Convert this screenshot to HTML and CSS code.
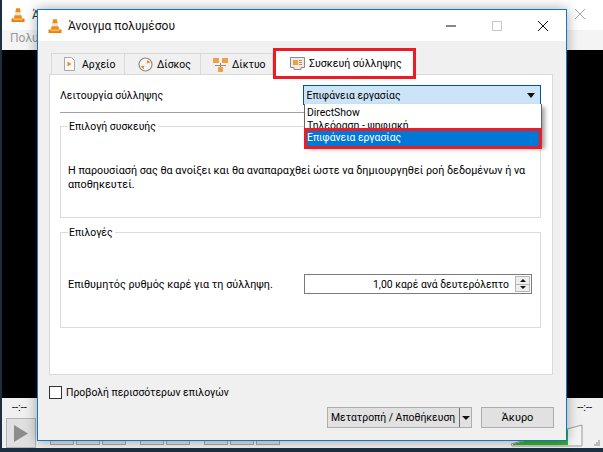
FILE: index.html
```html
<!DOCTYPE html>
<html lang="el">
<head>
<meta charset="utf-8">
<title>Άνοιγμα πολυμέσου</title>
<link rel="stylesheet" href="styles.css">
</head>
<body>
<svg width="0" height="0" class="defs">
  <symbol id="cone" viewBox="0 0 16 16">
    <path d="M6.2 1.2h3.6l1 4.3H5.2z" fill="#f08a12"/>
    <path d="M5.2 5.5h5.6l.6 2.8H4.6z" fill="#e9e4dc"/>
    <path d="M4.6 8.3h6.8l.7 3.2H3.9z" fill="#f08a12"/>
    <path d="M1.5 11.5h3v-.3l7 0v.3h3V15h-13z" fill="#e8800c"/>
    <path d="M3.9 11.5h8.2l.4 1.7H3.500z" fill="#f7b56a"/>
  </symbol>
</svg>

<div class="vlc">
  <div class="vlc-title">
    <svg class="vlc-cone"><use href="#cone"/></svg>
    <span class="vlc-title-text">Άν</span>
    <span class="vlc-close">
      <svg width="10" height="10" viewBox="0 0 10 10"><path d="M0 0l10 10M10 0L0 10" stroke="#a8a8a8" fill="none"/></svg>
    </span>
  </div>
  <div class="vlc-menu">Πολυ</div>
  <div class="vlc-video"></div>
  <div class="vlc-controls">
    <div class="vlc-times"><span>--:--</span><span>--:--</span></div>
    <div class="vlc-buttons">
      <div class="play"><svg width="14" height="17" viewBox="0 0 14 17"><path d="M0 0l14 8.500L0 17z" fill="#8c8c8c"/></svg></div>
      <div class="mini-group"><i></i><i></i><i></i></div>
      <div class="mini-group"><i></i><i></i></div>
      <div class="mini-group"><i></i><i></i><i></i></div>
      <svg class="volume" width="74" height="23" viewBox="0 0 74 23"><path d="M1 20L72 1v20a1 1 0 0 1-1 1H2z" fill="#f4f4f4" stroke="#9a9a9a"/><path d="M3 20L58 5.500V21H3z" fill="#39b02a"/></svg>
      <svg class="grip" width="6" height="6" viewBox="0 0 6 6"><path d="M4 0h2v2H4zM2 2h2v2H2zM4 2h2v2H4zM0 4h2v2H0zM2 4h2v2H2zM4 4h2v2H4z" fill="#bdbdbd"/></svg>
    </div>
  </div>
</div>

<div class="dialog">
  <header class="titlebar">
    <svg class="title-cone"><use href="#cone"/></svg>
    <span class="title-text">Άνοιγμα πολυμέσου</span>
    <span class="win-btn"><svg width="12" height="12" viewBox="0 0 12 12"><path d="M1 6h10" stroke="#111" fill="none"/></svg></span>
    <span class="win-btn"><svg width="12" height="12" viewBox="0 0 12 12"><rect x="1.500" y="1.500" width="9" height="9" stroke="#c8c8c8" fill="none"/></svg></span>
    <span class="win-btn"><svg width="12" height="12" viewBox="0 0 12 12"><path d="M1 1l10 10M11 1L1 11" stroke="#111" fill="none"/></svg></span>
  </header>

  <div class="body">
    <nav class="tabs">
      <div class="tab t1">
        <svg width="11" height="14" viewBox="0 0 11 14"><path d="M.5.500h7l3 3v10H.5z" fill="#fafafa" stroke="#a8a8a8"/><path d="M3.500 4.500l4 2.500-4 2.500z" fill="#f08a12"/></svg>
        <span>Αρχείο</span>
      </div>
      <div class="tab t2">
        <svg width="15" height="15" viewBox="0 0 15 15"><circle cx="7.500" cy="7.500" r="6.500" fill="#f6f6f6" stroke="#8c8c8c" stroke-width="1.200"/><path d="M8.500 6.500L9.500 3l3 2.500zM6.500 8.500L5.500 12l-3-2.500z" fill="#f08a12"/></svg>
        <span>Δίσκος</span>
      </div>
      <div class="tab t3">
        <svg width="15" height="15" viewBox="0 0 15 15"><path d="M7.500 6v5M2 8.500h11" stroke="#8c8c8c" fill="none"/><rect x="0" y="1" width="6" height="5" fill="#f0a040"/><rect x="9" y="1" width="6" height="5" fill="#f0a040"/><rect x="5" y="10" width="5" height="5" fill="#f0a040"/></svg>
        <span>Δίκτυο</span>
      </div>
      <div class="tab tab-active">
        <svg width="15" height="13" viewBox="0 0 15 13"><path d="M.5.500h14v10H11v2H4v-2H.5z" fill="#ececec" stroke="#8a8a8a"/><rect x="3" y="3" width="5" height="5" fill="#f0a040"/><path d="M9 3.500h3M9 5.500h3M9 7.500h3" stroke="#e08a30"/></svg>
        <span>Συσκευή σύλληψης</span>
      </div>
    </nav>

    <section class="pane">
      <div class="mode-row">
        <span class="mode-label">Λειτουργία σύλληψης</span>
        <div class="combo">
          <span>Επιφάνεια εργασίας</span>
          <span class="arrow"></span>
        </div>
      </div>
      <div class="rule"></div>

      <fieldset class="group group-device">
        <legend>Επιλογή συσκευής</legend>
        <p class="note">Η παρουσίασή σας θα ανοίξει και θα αναπαραχθεί ώστε να δημιουργηθεί ροή δεδομένων ή να αποθηκευτεί.</p>
      </fieldset>

      <fieldset class="group group-options">
        <legend>Επιλογές</legend>
        <div class="rate-row">
          <span class="rate-label">Επιθυμητός ρυθμός καρέ για τη σύλληψη.</span>
          <div class="spin">
            <span class="spin-value">1,00 καρέ ανά δευτερόλεπτο</span>
            <span class="spin-btns"><b class="up"></b><b class="down"></b></span>
          </div>
        </div>
      </fieldset>

      <ul class="dropdown">
        <li>DirectShow</li>
        <li class="clipped">Τηλεόραση - ψηφιακή</li>
        <li class="selected">Επιφάνεια εργασίας</li>
      </ul>
    </section>

    <label class="more">
      <span class="check"></span>
      <span>Προβολή περισσότερων επιλογών</span>
    </label>

    <footer class="actions">
      <div class="btn btn-split"><span class="btn-main">Μετατροπή / Αποθήκευση</span><span class="btn-drop"></span></div>
      <div class="btn btn-cancel">Άκυρο</div>
    </footer>
  </div>
</div>
</body>
</html>
```
FILE: styles.css
```css
* { box-sizing: border-box; }
html, body { margin: 0; width: 603px; height: 452px; overflow: hidden; }
body { background: #1c2f42; font: 10.400px/15px Roboto, "Noto Sans", sans-serif; color: #000; position: relative; white-space: nowrap; }
.defs { position: absolute; }

.vlc { position: absolute; left: 2px; top: 0; width: 601px; height: 448px; display: flex; flex-direction: column; background: #f0f0f0; }
.vlc-title { height: 30px; background: #fff; display: flex; align-items: center; padding-left: 8px; gap: 6px; flex: none; }
.vlc-cone { width: 16px; height: 16px; }
.vlc-title-text { font-size: 12px; color: #333; }
.vlc-close { margin-left: auto; margin-right: 18px; display: flex; margin-top: -2px; }
.vlc-menu { height: 20px; flex: none; color: #9a9a9a; padding: 1px 0 0 8px; background: #f4f4f4; font-size: 12px; }
.vlc-video { height: 348px; background: #000; flex: none; }
.vlc-controls { flex: 1; display: flex; flex-direction: column; background: #f0f0f0; position: relative; }
.vlc-times { display: flex; justify-content: space-between; padding: 2px 11px 0 10px; height: 20px; font-size: 11px; }
.vlc-buttons { display: flex; align-items: flex-end; padding-left: 4px; }
.play { width: 30px; height: 30px; border: 1px solid #b4b4b4; background: #e0e0e0; display: flex; align-items: center; justify-content: center; margin-right: 14px; }
.mini-group { display: flex; gap: 2px; margin-right: 14px; padding-bottom: 3px; }
.mini-group i { display: block; width: 24px; height: 8px; background: #e0e0e0; border: 1px solid #a8a8a8; }
.volume { position: absolute; left: 508px; bottom: 1px; }
.grip { position: absolute; right: 3px; bottom: 2px; }

.dialog { position: absolute; left: 37px; top: 9px; width: 530px; height: 432px; border: 1px solid #0a78d2; background: #f0f0f0; display: flex; flex-direction: column; box-shadow: 0 0 12px rgba(0,0,0,.35); }
.titlebar { height: 31px; flex: none; background: #fff; display: flex; align-items: center; padding-left: 9px; }
.title-cone { width: 16px; height: 16px; margin-right: 5px; }
.title-text { font-size: 12px; flex: 1; color: #111; padding-top: 2px; }
.win-btn { width: 46px; display: flex; justify-content: center; }

.body { flex: 1; padding: 12px 13px 0 11px; display: flex; flex-direction: column; }
.tabs { display: flex; height: 21px; flex: none; padding-left: 2px; }
.tab { display: flex; align-items: center; border: 1px solid #d9d9d9; border-bottom: none; border-left: none; background: #f0f0f0; padding-left: 12px; }
.t1 { width: 74px; border-left: 1px solid #d9d9d9; gap: 7px; }
.t2 { width: 76px; gap: 4px; padding-left: 13px; }
.t3 { width: 72px; gap: 4px; }
.tab-active { width: 143px; margin-top: -5px; height: 31px; gap: 4px; background: #fff; border: 3px solid #ed1c24; padding-left: 14px; position: relative; z-index: 2; font-size: 10.600px; }

.pane { position: relative; height: 301px; flex: none; background: #fff; border: 1px solid #d9d9d9; padding: 10px 11px 0 10px; }
.mode-row { display: flex; align-items: center; height: 20px; }
.mode-label { width: 244px; }
.combo { width: 238px; height: 20px; background: #cce4f7; border: 1px solid #005499; display: flex; align-items: center; justify-content: space-between; padding: 0 5px 0 2px; }
.arrow { width: 0; height: 0; border: 4px solid transparent; border-top: 5px solid #111; border-bottom: none; }
.rule { height: 1px; background: #a0a0a0; width: 244px; margin-top: 7px; }

.group { margin: 0; padding: 0; min-width: 0; border: 1px solid #dcdcdc; }
.group legend { padding: 0 2px 0 1px; margin-left: 7px; }
.group-device { margin-top: 6px; height: 99px; }
.note { margin: 30px 0 0 7px; width: 475px; line-height: 14px; white-space: normal; font-size: 10.800px; }
.group-options { margin-top: 7px; height: 103px; }
.rate-row { display: flex; align-items: center; margin-top: 34px; padding-left: 7px; }
.rate-label { width: 236px; font-size: 10.800px; }
.spin { width: 228px; height: 20px; border: 1px solid #7a7a7a; display: flex; align-items: center; justify-content: flex-end; padding-right: 1px; }
.spin-value { margin-right: 6px; }
.spin-btns { width: 15px; height: 16px; border: 1px solid #b5b5b5; display: flex; flex-direction: column; background: #eee; }
.spin-btns b { flex: 1; display: flex; align-items: center; justify-content: center; }
.spin-btns b::before { content: ""; border: 3px solid transparent; }
.up::before { border-bottom: 3px solid #111 !important; border-top: none !important; }
.down { border-top: 1px solid #b5b5b5; }
.down::before { border-top: 3px solid #111 !important; border-bottom: none !important; }

.dropdown { position: absolute; left: 254px; top: 29px; width: 238px; height: 42px; margin: 0; padding: 1px 0 0; list-style: none; background: #fff; border: 1px solid #646464; border-top: none; box-shadow: 3px 3px 4px rgba(0,0,0,.35); z-index: 3; }
.dropdown li { padding-left: 2px; height: 13px; line-height: 15px; }
.dropdown .clipped { height: 10px; overflow: hidden; }
.dropdown .selected { position: absolute; left: -1px; top: 24px; width: 238px; height: 21px; background: #0078d7; color: #fff; border: 3px solid #ed1c24; padding: 0; line-height: 14px; }

.more { display: flex; align-items: center; gap: 4px; margin-top: 11px; height: 13px; flex: none; }
.check { width: 13px; height: 13px; border: 1px solid #333; background: #fff; }
.actions { display: flex; justify-content: flex-end; gap: 9px; margin-top: 8px; margin-right: -1px; }
.btn { height: 21px; background: #e1e1e1; border: 1px solid #adadad; display: flex; align-items: center; justify-content: center; }
.btn-split { width: 145px; justify-content: flex-start; padding-left: 3px; }
.btn-main { flex: 1; }
.btn-drop { width: 12px; height: 19px; border-left: 1px solid #707070; position: relative; flex: none; }
.btn-drop::after { content: ""; position: absolute; left: 2px; top: 8px; border: 4px solid transparent; border-top: 4px solid #111; border-bottom: none; }
.btn-cancel { width: 73px; font-size: 11px; }
```
